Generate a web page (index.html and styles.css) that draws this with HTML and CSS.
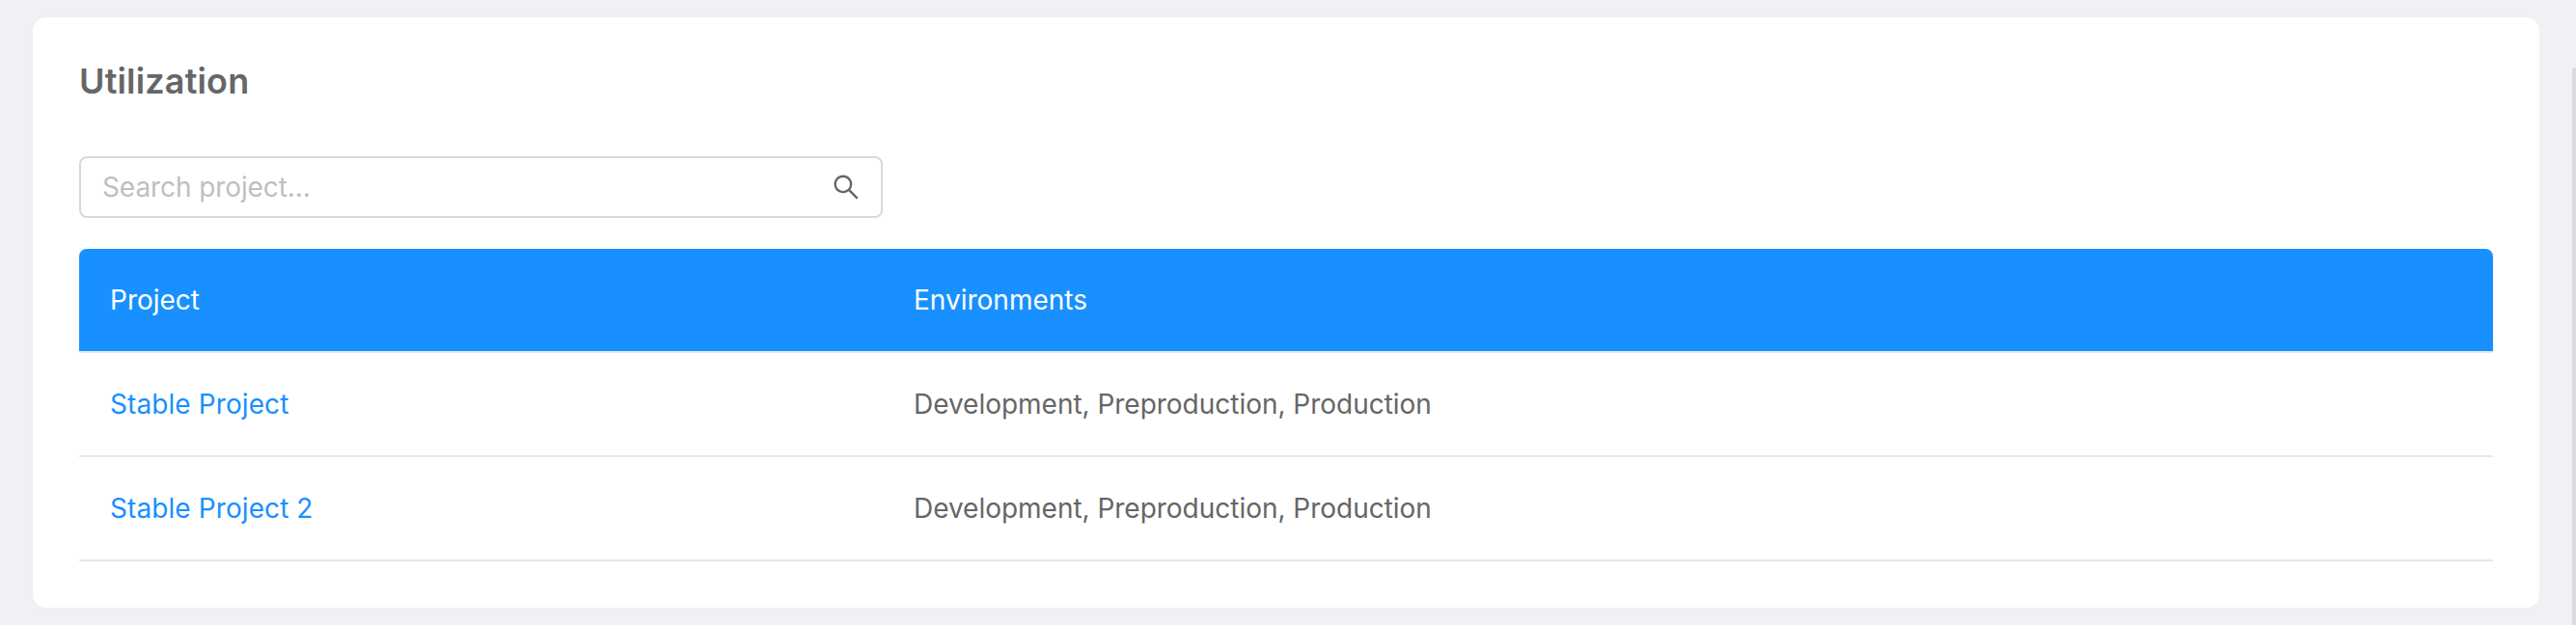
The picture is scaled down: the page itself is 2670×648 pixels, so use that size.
FILE: index.html
```html
<!DOCTYPE html>
<html lang="en">
<head>
<meta charset="utf-8">
<title>Utilization</title>
<link rel="stylesheet" href="styles.css">
</head>
<body>
<main class="page">
  <section class="card">
    <h1 class="title">Utilization</h1>
    <div class="search">
      <input class="search-input" type="text" placeholder="Search project...">
      <svg class="search-icon" viewBox="64 64 896 896" aria-hidden="true"><path d="M909.6 854.5L649.9 594.8C690.2 542.7 712 479 712 412c0-80.2-31.3-155.4-87.9-212.1-56.6-56.7-132-87.9-212.1-87.9s-155.5 31.3-212.1 87.9C143.2 256.5 112 331.8 112 412c0 80.1 31.3 155.5 87.9 212.1C256.5 680.8 331.8 712 412 712c67 0 130.6-21.8 182.7-62l259.7 259.6a8.2 8.2 0 0 0 11.6 0l43.6-43.5a8.2 8.2 0 0 0 0-11.6zM570.4 570.4C528 612.7 471.8 636 412 636s-116-23.3-158.4-65.6C211.3 528 188 471.8 188 412s23.3-116.1 65.6-158.4C296 211.3 352.2 188 412 188s116.1 23.2 158.4 65.6S636 352.2 636 412s-23.3 116.1-65.6 158.4z"/></svg>
    </div>
    <table class="table">
      <thead>
        <tr><th>Project</th><th>Environments</th></tr>
      </thead>
      <tbody>
        <tr><td><a class="link" href="#">Stable Project</a></td><td>Development, Preproduction, Production</td></tr>
        <tr><td><a class="link" href="#">Stable Project 2</a></td><td>Development, Preproduction, Production</td></tr>
      </tbody>
    </table>
  </section>
</main>
<div class="scroll-thumb"></div>
</body>
</html>
```
FILE: styles.css
```css
* { box-sizing: border-box; }

body {
  margin: 0;
  height: 648px;
  overflow: hidden;
  background: #eff1f5;
  color: #666;
  font-family: Inter, "Liberation Sans", sans-serif;
  font-size: 28px;
}

.page { padding: 18px 38px 18px 34px; }

.card {
  height: 612px;
  padding: 40px 48px 48px;
  background: #fff;
  border-radius: 14px;
  box-shadow: 0 0 2px 1px #f0f0f0;
}

.title {
  margin: 0 0 52px;
  font-size: 36px;
  line-height: 52px;
  font-weight: 600;
  letter-spacing: 0.16px;
}

.search {
  display: flex;
  align-items: center;
  width: 833px;
  height: 64px;
  margin-bottom: 32px;
  padding: 0 22px;
  border: 2px solid #d9d9d9;
  border-radius: 8px;
}

.search-input {
  flex: 1;
  min-width: 0;
  padding: 0;
  border: 0;
  outline: 0;
  background: none;
  color: #666;
  font: inherit;
  letter-spacing: -0.09px;
}

.search-input::placeholder { color: #bfbfbf; }

.search-icon {
  width: 28px;
  height: 28px;
  fill: #666;
}

.table {
  width: 100%;
  table-layout: fixed;
  border-collapse: separate;
  border-spacing: 0;
}

.table th,
.table td {
  height: 108px;
  padding: 0 32px;
  border-bottom: 2px solid #e8e8e8;
  text-align: left;
  font-weight: 400;
  line-height: 42px;
}

.table th {
  background: #1890ff;
  background-clip: padding-box;
  color: #fff;
}

.table th:first-child { width: 833px; }

.table td:last-child { letter-spacing: -0.02px; }

.table th:first-child { border-top-left-radius: 8px; }
.table th:last-child { border-top-right-radius: 8px; }

.link {
  color: #1890ff;
  text-decoration: none;
  letter-spacing: 0.09px;
}

/* Overlay scrollbar thumb at the window edge */
.scroll-thumb {
  position: absolute;
  top: 70px;
  right: 0;
  bottom: 0;
  width: 4px;
  background: #dcdcdc;
  border-top-left-radius: 3px;
}
```
